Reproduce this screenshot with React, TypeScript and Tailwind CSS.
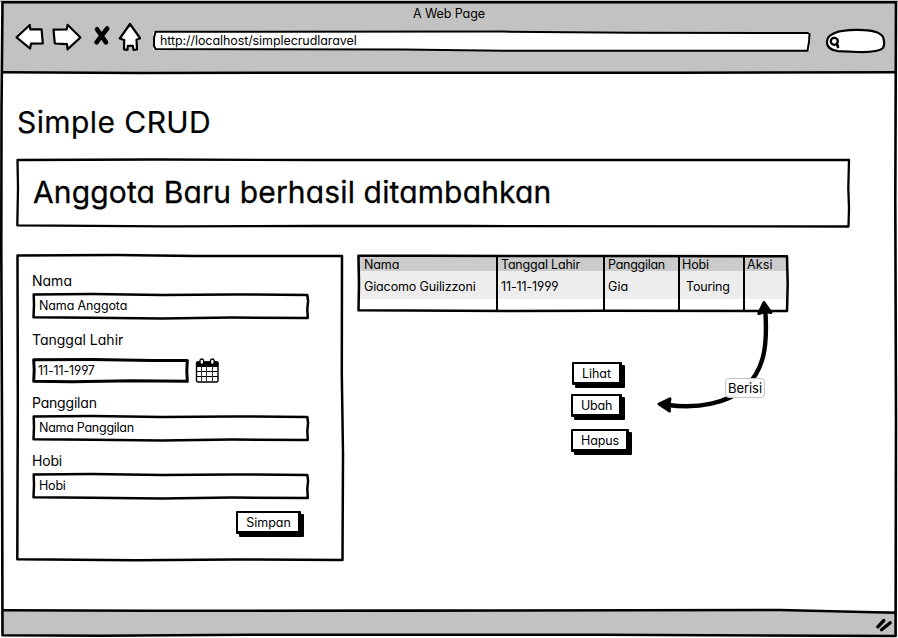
import type { ReactNode } from "react";

/** Hand-drawn outline laid over a box; children keep their normal flow. */
function Sketch({
  w,
  h,
  d,
  stroke = 2.5,
  className,
  children,
}: {
  w: number;
  h: number;
  d: string;
  stroke?: number;
  className: string;
  children?: ReactNode;
}) {
  return (
    <div className={`relative ${className}`}>
      <svg
        className="pointer-events-none absolute inset-0 z-10 h-full w-full overflow-visible"
        viewBox={`0 0 ${w} ${h}`}
        fill="none"
        stroke="#000"
        strokeWidth={stroke}
        strokeLinejoin="round"
        strokeLinecap="round"
      >
        <path d={d} />
      </svg>
      {children}
    </div>
  );
}

function TextField({ children }: { children: ReactNode }) {
  return (
    <Sketch
      w={277}
      h={26}
      d="M1.7 1.4 L60 1 L130 2 L200 1.4 L275.3 2 L276.1 8 L275.3 16 L275.8 25 L200 24.6 L130 25.4 L60 24.8 L1.5 24.2 L2 12 Z"
      className="flex h-[26px] w-[277px] items-center pl-[7px] text-[12.5px]"
    >
      {children}
    </Sketch>
  );
}

function Button({ className, children }: { className: string; children: ReactNode }) {
  return (
    <button
      className={`block rounded-[1px] border-2 border-r-[3px] border-b-[3px] border-black bg-white pt-px text-[12.5px] leading-[18px] shadow-[3px_3px_0_0_#000] ${className}`}
    >
      {children}
    </button>
  );
}

function CalendarIcon() {
  return (
    <svg width="24" height="25" viewBox="0 0 24 25" fill="none" stroke="#000">
      <rect x="1.5" y="4" width="21.5" height="20" rx="1.5" fill="#fff" strokeWidth="1.4" />
      <path d="M1.5 4h21.5v4.5h-21.5z" fill="#000" />
      <path d="M1.5 13.5h21.5M1.5 18.5h21.5" strokeWidth="1" />
      <path d="M6.5 8v16M11.5 8v16M17.5 8v16" strokeWidth="1" stroke="#333" />
      <rect x="5" y="1" width="3.6" height="5.5" rx="1.8" fill="#fff" strokeWidth="1.3" />
      <rect x="15.5" y="1" width="3.6" height="5.5" rx="1.8" fill="#fff" strokeWidth="1.3" />
    </svg>
  );
}

function NavIcons() {
  return (
    <svg
      className="shrink-0"
      width="126"
      height="30"
      viewBox="15 22 126 30"
      fill="#fff"
      stroke="#000"
      strokeWidth="2.2"
      strokeLinejoin="round"
      strokeLinecap="round"
    >
      <path d="M16.6 37.3 L29.8 25 L30.3 29.3 L41.6 29.3 L42.8 43.5 L31 43.7 L30 48.5 Z" />
      <path d="M53.5 29.6 L66.8 29.3 L67.6 24.8 L80.4 37.5 L67.5 49.4 L67 44.2 L54.8 43.5 Z" />
      <path d="M97 29.3 L106 42.4 M107.2 28.5 L96.5 42.3" strokeWidth="4.6" fill="none" />
      <path d="M130 24 L140.2 38.3 L136.5 39.8 L137 49.5 L133.5 49.8 L132.8 45.8 L127.8 45.8 L127.5 49.8 L124 49.3 L124.2 40 L119.8 38.5 Z" />
    </svg>
  );
}

const columns = [
  { head: "Nama", value: "Giacomo Guilizzoni", col: "w-[141px] pl-[7px]", headText: "tracking-[-0.1px]", valueText: "tracking-[-0.13px]" },
  { head: "Tanggal Lahir", value: "11-11-1999", col: "w-[107px] pl-[3px]", headText: "tracking-[-0.2px]", valueText: "tracking-[-0.13px]" },
  { head: "Panggilan", value: "Gia", col: "w-[75px] pl-[3px]", headText: "tracking-[-0.27px]", valueText: "tracking-[0.1px]" },
  { head: "Hobi", value: "Touring", col: "w-[65px] pl-[2px]", headText: "tracking-[-0.12px]", valueText: "tracking-[-0.18px] pl-[4px]" },
  { head: "Aksi", value: "", col: "w-[42px] pl-[2px]", headText: "tracking-[0.1px]", valueText: "" },
];

function MemberTable() {
  return (
    <Sketch
      w={431}
      h={57}
      d="M1.5 1.8 L70 1.8 L250 2 L430 2.3 L430.7 30 L430 57 L250 56.8 L150 57 L1.5 56.3 L2 30 Z"
      className="h-[57px] w-[431px] bg-white pt-[2px] text-[12.5px]"
    >
      <div className="flex h-[55px]">
        {columns.map((c, i) => (
          <div
            key={c.head}
            className={`shrink-0 border-black bg-[linear-gradient(#cbcbcb_15px,#ededed_15px,#ededed_43px,#fff_43px)] whitespace-nowrap ${i < 4 ? "border-r-2" : ""} ${c.col}`}
          >
            <div className={`mt-px h-4 leading-4 ${c.headText}`}>{c.head}</div>
            <div className={`mt-[6px] h-4 leading-4 ${c.valueText}`}>{c.value}</div>
          </div>
        ))}
      </div>
    </Sketch>
  );
}

function MemberForm() {
  return (
    <Sketch
      w={328}
      h={307}
      d="M1.5 1.5 L100 1 L180 2 L326 2 L325.8 120 L327 200 L326.5 306 L220 305.5 L120 306.3 L1.3 305.3 L1.8 150 Z"
      className="flex h-[307px] w-[328px] shrink-0 flex-col pl-[16px] text-[14px]"
    >
      <label className="mt-[18px] h-[18px] leading-[18px]">Nama</label>
      <div className="mt-[3px]">
        <TextField><span className="tracking-[-0.12px]">Nama Anggota</span></TextField>
      </div>
      <label className="mt-[12px] h-[18px] leading-[18px]">Tanggal Lahir</label>
      <div className="mt-[9px] flex items-center gap-[6px]">
        <Sketch
          w={157}
          h={25}
          stroke={3}
          d="M1.7 1.8 L60 1.6 L120 2.4 L155.3 2.4 L154.8 13 L155.3 23.2 L100 22.7 L40 23.7 L1.7 23.2 L2.2 12 Z"
          className="flex h-[25px] w-[157px] items-center pl-[6px] text-[12.5px]"
        >
          <span className="mt-px tracking-[-0.13px]">11-11-1997</span>
        </Sketch>
        <CalendarIcon />
      </div>
      <label className="mt-[11px] h-[18px] leading-[18px] tracking-[-0.2px]">Panggilan</label>
      <div className="mt-[3px]">
        <TextField><span className="tracking-[-0.27px]">Nama Panggilan</span></TextField>
      </div>
      <label className="mt-[11px] h-[18px] leading-[18px] tracking-[-0.2px]">Hobi</label>
      <div className="mt-[3px]">
        <TextField><span className="tracking-[-0.2px]">Hobi</span></TextField>
      </div>
      <Button className="mt-[12px] ml-[204px] h-[23px] w-[65px] pt-[2px] pl-px">Simpan</Button>
    </Sketch>
  );
}

function Connector() {
  return (
    <svg
      className="pointer-events-none absolute top-[298px] left-[654px] z-10"
      width="124"
      height="118"
      viewBox="654 298 124 118"
      fill="none"
      stroke="#000"
      strokeLinejoin="round"
    >
      <path d="M765.3 310 C768 350 763 370 745 388 C727 403 699 409 668 405" strokeWidth="4.4" />
      <path d="M764 302.5 L771 312.5 L765 311.5 L758.8 313.5 Z" fill="#000" strokeWidth="3" />
      <path d="M659 404 L670 398.8 L669 405 L669.5 411 Z" fill="#000" strokeWidth="3" />
    </svg>
  );
}

export default function App() {
  return (
    <div className="relative flex h-[638px] w-[898px] flex-col overflow-hidden bg-white font-['Inter','Open_Sans',sans-serif] text-black [font-feature-settings:'cv11','cv04']">
      <header className="mx-[3px] mt-[2px] h-[71px] shrink-0 bg-[#c2c2c2]">
        <div className="h-6 text-center text-[12.5px] leading-6 tracking-[-0.08px]">A Web Page</div>
        <div className="-mt-[4px] flex h-[30px] items-center pl-3">
          <NavIcons />
          <Sketch
            w={657}
            h={22}
            stroke={2}
            d="M2.5 1.8 L350 1.6 L480 2.8 L655 3 L656.5 4 L656 12 L654.5 20.8 L350 20.8 L250 19.6 L2.5 19 L1 16 L1 8 Z"
            className="mt-[8px] ml-[12px] flex h-[22px] w-[657px] shrink-0 items-center bg-[linear-gradient(#c2c2c2_2px,#fff_2px,#fff_20px,#c2c2c2_20px)] pl-[7px] text-[12.5px] tracking-[-0.08px]"
          >
            <span className="mt-px">http://localhost/simplecrudlaravel</span>
          </Sketch>
          <svg className="mt-[7px] ml-[14px] shrink-0" width="62" height="26" viewBox="824 28 62 26" fill="#fff" stroke="#000" strokeWidth="2.2" strokeLinejoin="round">
            <path d="M838 51.2 C830 50 826.5 46 827 41 C828 33 838 30 856 29.8 C872 29.5 880 31.5 883 37 C884.5 41 884.5 45 883 48 C879 51.5 868 52.3 858 52 Z" />
            <circle cx="834.3" cy="41.3" r="3.5" strokeWidth="2.3" />
            <path d="M837 44 L838 47" strokeWidth="2.6" strokeLinecap="round" />
          </svg>
        </div>
      </header>

      <main className="flex-1 pt-[29px] pl-4">
        <h1 className="h-10 pl-px text-[30px] leading-10 tracking-[0.42px] [-webkit-text-stroke:0.2px_#000]">Simple CRUD</h1>
        <Sketch
          w={834}
          h={69}
          d="M1.5 2 L140 1.5 L300 2 L450 2 L700 2 L833 2 L832.3 30 L833 50 L832.5 68.5 L450 68 L300 68 L150 68.3 L1.3 67.3 L2 30 Z"
          stroke={2.3}
          className="mt-[16px] flex h-[69px] w-[834px] items-center pl-[17px]"
        >
          <p className="-mt-[2px] text-[30px] leading-10 tracking-[0.14px] [-webkit-text-stroke:0.3px_#000]">
            Anggota Baru berhasil ditambahkan
          </p>
        </Sketch>

        <div className="mt-[27px] flex gap-[13px]">
          <MemberForm />
          <div>
            <MemberTable />
            <div className="mt-[51px] ml-[214px] flex flex-col items-start">
              <Button className="ml-px h-[23px] w-[50px]">Lihat</Button>
              <Button className="mt-[9px] h-[23px] w-[51px] pl-px tracking-[-0.2px]">Ubah</Button>
              <Button className="mt-[12px] h-[23px] w-[58px] pl-px tracking-[-0.1px]">Hapus</Button>
            </div>
          </div>
        </div>
      </main>

      <footer className="mx-[3px] mb-[2px] h-[25px] shrink-0 bg-[#c2c2c2]" />

      <Connector />
      <div className="absolute top-[378px] left-[725px] z-20 flex h-[20px] w-[40px] items-center justify-center rounded-[4px] border border-[#c4c4c4] bg-white/95 text-[13px] leading-none tracking-[-0.06px]">
        Berisi
      </div>

      <svg
        className="pointer-events-none absolute inset-0"
        width="898"
        height="638"
        viewBox="0 0 898 638"
        fill="none"
        stroke="#000"
        strokeWidth="3"
        strokeLinejoin="round"
      >
        <path d="M0 1.2 L898 1.2" stroke="#444" strokeWidth="1" />
        <path d="M2.5 2.3 L896 2.3 L895.3 200 L896 420 L895.6 636 L600 634.8 L250 634.8 L100 635.8 L2.5 635.3 L2 420 L1.3 250 L1.5 110 Z" strokeWidth="2.6" />
        <path d="M3 72.3 L140 73 L300 72.7 L680 72.7 L895 72.3" strokeWidth="2.6" />
        <path d="M3 610.2 L150 610.8 L400 610.6 L780 610 L895 612.8" strokeWidth="2.6" />
        <path d="M877.8 626.8 L883.8 620.5 M881.5 629.8 L890.2 622.8" strokeWidth="3.4" strokeLinecap="round" />
      </svg>
    </div>
  );
}
